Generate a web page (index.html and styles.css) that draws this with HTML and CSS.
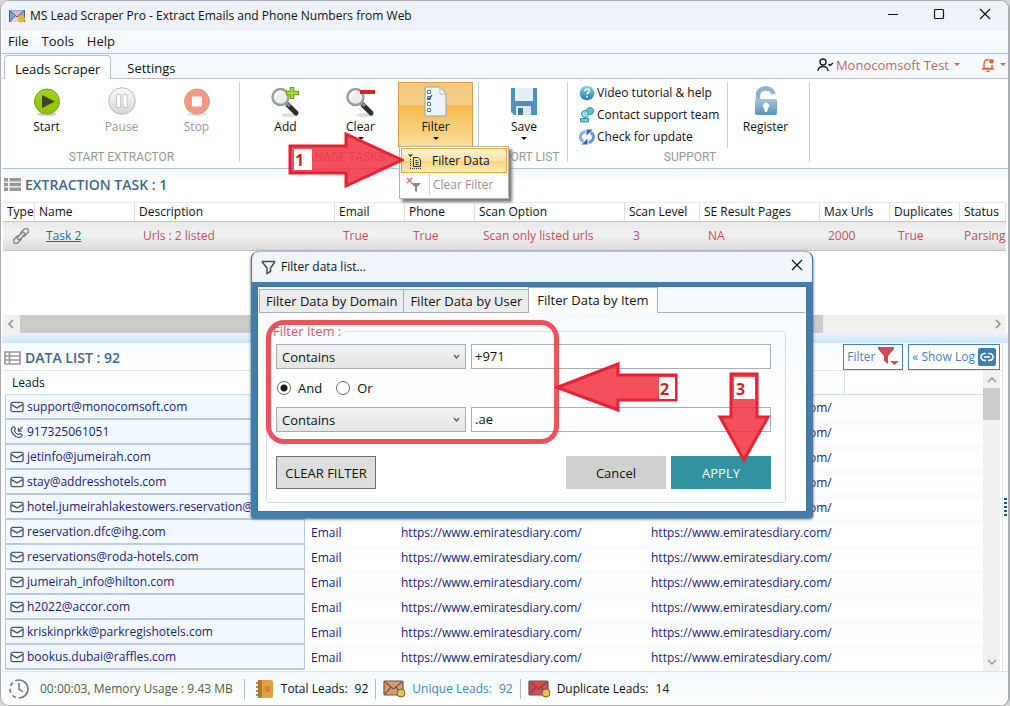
FILE: index.html
```html
<!DOCTYPE html>
<html lang="en">
<head>
<meta charset="utf-8">
<title>MS Lead Scraper Pro</title>
<link rel="stylesheet" href="styles.css">
</head>
<body>
<svg class="defs" width="0" height="0" aria-hidden="true">
  <defs>
    <symbol id="mail" viewBox="0 0 15 12"><rect x="1" y="1" width="13" height="10" rx="2" fill="none" stroke="#4c5866" stroke-width="1.4"/><path d="M1.5 3.5 7.5 7l6-3.5" fill="none" stroke="#4c5866" stroke-width="1.4"/></symbol>
    <symbol id="phone" viewBox="0 0 15 14"><path d="M3 1.500c1-.8 2 0 2.600 1.500.4 1-.9 1.600-.8 2.500.4 2 1.700 3.400 3.700 4 1 .2 1.500-1.200 2.500-.8 1.500.7 2.500 1.500 1.600 2.700C10 14 6.500 12.500 4 10 1.500 7.500.8 4 3 1.500z" fill="none" stroke="#4c5866" stroke-width="1.300"/><path d="M13.500 1.500 9 6M9 2.500V6h3.500" fill="none" stroke="#4c5866" stroke-width="1.300"/></symbol>
    <symbol id="letter" viewBox="0 0 23 18"><rect x="1" y="1" width="19" height="14" rx="1" fill="currentColor" stroke="#6b5550" stroke-width="1.200"/><path d="M1.500 1.500 10.500 9l9-7.500M1.500 14.500 8 7M19.500 14.500 13 7" fill="none" stroke="#6b5550" stroke-width="1.200"/><circle cx="18" cy="13" r="4" fill="#eac04f" stroke="#75603a"/></symbol>
    <linearGradient id="green" x2="0" y2="1"><stop offset="0" stop-color="#a6cf20"/><stop offset="1" stop-color="#8fc400"/></linearGradient>
    <linearGradient id="grey" x2="0" y2="1"><stop offset="0" stop-color="#fafafa"/><stop offset="1" stop-color="#d4d8da"/></linearGradient>
    <linearGradient id="lock" x2="0" y2="1"><stop offset="0" stop-color="#9cc5e3"/><stop offset="1" stop-color="#5f93b5"/></linearGradient>
    <linearGradient id="ball" x2="0" y2="1"><stop offset="0" stop-color="#8fd2e6"/><stop offset="1" stop-color="#1d7fb0"/></linearGradient>
    <symbol id="lens" viewBox="0 0 32 32"><ellipse cx="20" cy="29" rx="9" ry="2" fill="#ddd"/><path d="m18 19 8 8" stroke="#2e2e2e" stroke-width="5" stroke-linecap="round"/><path d="m16 17 4 3" stroke="#888" stroke-width="3"/><circle cx="10.500" cy="11" r="8" fill="#e9edf1" stroke="#999da0" stroke-width="2.500"/><path d="M5 12a6 6 0 0 1 7-6" stroke="#fff" stroke-width="2.500" fill="none"/></symbol>
  </defs>
</svg>
<main class="window">
  <header class="titlebar">
    <svg class="app-icon" width="16" height="13" viewBox="0 0 16 13"><rect width="16" height="12" rx="1" fill="#8baed2"/><path d="M0 12 6 5h4l6 7z" fill="#ecd5b0"/><path d="M0 1l8 6 8-6z" fill="#e5b6bd"/><path d="M0 1v11l6-6z" fill="#71a9d6"/><path d="M.5 12V.5L8 7l7.500-6.500V12M.5 12 6 6M15.500 12 10 6" fill="none" stroke="#4d587b"/><circle cx="12.500" cy="9" r="3.500" fill="#f2b13c"/></svg>
    <span class="title">MS Lead Scraper Pro - Extract Emails and Phone Numbers from Web</span>
    <div class="window-buttons">
      <button aria-label="Minimize"><svg width="12" height="12"><path d="M1 6.500h10" stroke="#111"/></svg></button>
      <button aria-label="Maximize"><svg width="12" height="12"><rect x="1.500" y="1.500" width="9" height="9" rx="1" fill="none" stroke="#111" stroke-width="1.200"/></svg></button>
      <button aria-label="Close"><svg width="12" height="12"><path d="m1 1 10 10M11 1 1 11" stroke="#111" stroke-width="1.200"/></svg></button>
    </div>
  </header>
  <nav class="menubar"><button>File</button><button>Tools</button><button>Help</button></nav>
  <div class="tabstrip">
    <button class="tab active">Leads Scraper</button><button class="tab">Settings</button>
    <div class="account">
      <button class="user"><svg width="17" height="14" viewBox="0 0 17 14"><circle cx="6" cy="4" r="3" fill="none" stroke="#1c1c24" stroke-width="1.400"/><path d="M1 13c0-6 10-6 10 0M11.500 6l1.500 1.500L16 5" fill="none" stroke="#1c1c24" stroke-width="1.400"/></svg>Monocomsoft Test<i class="caret"></i></button>
      <button class="bell" aria-label="Notifications"><svg width="14" height="14" viewBox="0 0 14 14"><path d="M8 2C4.500 1 3 3 3 6v4.500h8V7M1 11h12M5.500 13.300h3" fill="none" stroke="#f1592a" stroke-width="1.400"/><circle cx="10.500" cy="3.200" r="2.300" fill="#f1592a"/></svg><i class="caret"></i></button>
    </div>
  </div>
  <section class="ribbon">
    <div class="group g-start">
      <div class="tools">
        <button class="tool"><svg width="28" height="32" viewBox="0 0 28 32"><ellipse cx="14" cy="28" rx="10" ry="2" fill="#ccd"/><circle cx="14" cy="15.500" r="12.500" fill="url(#green)" stroke="#779b20"/><path d="m9 9 13 6.500L9 22z" fill="#40451f"/></svg>Start</button>
        <button class="tool off"><svg width="28" height="32" viewBox="0 0 28 32"><circle cx="14" cy="15" r="13.300" fill="url(#grey)" stroke="#bcbcbc"/><path d="M8.500 8.500h4v13h-4zM15 8.500h4v13h-4z" fill="#fff" stroke="#c5c9cc"/></svg>Pause</button>
        <button class="tool off"><svg width="28" height="32" viewBox="0 0 28 32"><ellipse cx="14" cy="28" rx="10" ry="2" fill="#eadbd6"/><circle cx="14" cy="15.500" r="12.500" fill="#f39a84" stroke="#cf9a8b"/><path d="M9 10.500h10v10H9z" fill="#fff"/></svg>Stop</button>
      </div>
      <h3>START EXTRACTOR</h3>
    </div>
    <div class="group g-manage">
      <div class="tools">
        <button class="tool"><svg width="32" height="32" viewBox="0 0 32 32"><use href="#lens"/><path d="M22 1v12M16 7h13" stroke="#64a318" stroke-width="4.600"/><path d="M22 2v10M17 7h11" stroke="#a6dc3c" stroke-width="2.400"/></svg>Add</button>
        <button class="tool"><svg width="32" height="32" viewBox="0 0 32 32"><use href="#lens"/><path d="M15 6h15" stroke="#cf2922" stroke-width="4"/></svg>Clear<i class="caret"></i></button>
        <button class="tool hot"><svg width="28" height="32" viewBox="0 0 28 32"><path d="M3 1h15l6 7v22H3z" fill="#eef3f8" stroke="#91a0b0"/><path d="M18 1v7h6z" fill="#fff" stroke="#aab4c0"/><path d="M5.500 4.500h3v3h-3zM5.500 10.500h3v3h-3zM5.500 16.500h3v3h-3zM5.500 22.500h3v3h-3z" fill="#fff" stroke="#657586"/><path d="m6 12 1 1 3-4" stroke="#223" fill="none"/></svg>Filter<i class="caret"></i></button>
      </div>
      <h3>MANAGE TASKS</h3>
    </div>
    <div class="group g-export">
      <div class="tools">
        <button class="tool"><svg width="28" height="32" viewBox="0 0 28 32"><path d="M1 2h26v27H4l-3-3z" fill="#5091bb"/><path d="M5 2h18v13H5z" fill="#e2f0f7"/><path d="M6 20h15v9H6z" fill="#dce9f0"/><path d="M8 22h5v7H8z" fill="#3976a0"/></svg>Save<i class="caret"></i></button>
      </div>
      <h3>EXPORT LIST</h3>
    </div>
    <div class="group g-support">
      <div class="tools">
        <div class="links">
          <button><svg width="16" height="16" viewBox="0 0 16 16"><circle cx="8" cy="8" r="7.300" fill="url(#ball)"/><path d="M5.700 6.200c.1-3 5-2.500 4.600 0C10 7.600 8 7.700 8 9.500M8 11v1.500" stroke="#fff" stroke-width="1.600" fill="none"/></svg>Video tutorial &amp; help</button>
          <button><svg width="16" height="16" viewBox="0 0 16 16"><circle cx="11" cy="4" r="3.500" fill="#5cc8d2" stroke="#3a8ea4"/><circle cx="6" cy="7" r="3.500" fill="#8ddde3" stroke="#3a8ea4"/><path d="M1.500 15v-3.500h8V15z" fill="#6bd0da" stroke="#3a8ea4"/></svg>Contact support team</button>
          <button><svg width="16" height="16" viewBox="0 0 16 16"><path d="M6.500 2.500C0 4 .5 11 4.500 12.500" fill="none" stroke="#7fb2e0" stroke-width="3"/><path d="M9.500 13.500C16 12 15.500 5 11.500 3.500" fill="none" stroke="#5d9dd5" stroke-width="3"/><path d="M2.500 15.500h6V9.500zM13.500.5h-6v6z" fill="#2f68ad"/></svg>Check for update</button>
        </div>
        <div class="register">
          <button class="tool"><svg width="28" height="32" viewBox="0 0 28 32"><path d="M6 14V9c0-8 14-9 15.500-1" fill="none" stroke="#8cb4d0" stroke-width="4.500"/><rect x="3" y="13" width="22" height="16" rx="2" fill="url(#lock)"/><path d="M12 22a3 3 0 1 1 4 0l-1 4h-2z" fill="#fff"/></svg>Register</button>
        </div>
      </div>
      <h3>SUPPORT</h3>
    </div>
  </section>

  <section class="tasks">
    <h2><svg width="17" height="13" viewBox="0 0 17 13"><path d="M0 0h4v3.500H0zM5.500 0H17v3.500H5.500zM0 4.800h4v3.500H0zM5.500 4.800H17v3.500H5.500zM0 9.500h4V13H0zM5.500 9.500H17V13H5.500z" fill="#989898"/></svg>EXTRACTION TASK : 1</h2>
    <table class="task-table">
      <colgroup><col class="w32"><col class="w100"><col class="w200"><col class="w70"><col class="w70"><col class="w150"><col class="w75"><col class="w120"><col class="w70"><col class="w70"><col></colgroup>
      <thead><tr><th>Type</th><th>Name</th><th>Description</th><th>Email</th><th>Phone</th><th>Scan Option</th><th>Scan Level</th><th>SE Result Pages</th><th>Max Urls</th><th>Duplicates</th><th>Status</th></tr></thead>
      <tbody><tr><td><svg class="clip" width="16" height="16" viewBox="0 0 16 16"><g transform="rotate(-45 8 8)" fill="none" stroke="#888" stroke-width="1.500"><rect x="-1.500" y="5.500" width="9" height="5" rx="2.500"/><rect x="8.500" y="5.500" width="9" height="5" rx="2.500"/><rect x="3.500" y="6.500" width="9" height="3" rx="1.500" fill="#eee"/></g></svg></td><td class="name"><a href="#task2">Task 2</a></td><td>Urls : 2 listed</td><td>True</td><td>True</td><td>Scan only listed urls</td><td>3</td><td>NA</td><td>2000</td><td>True</td><td>Parsing</td></tr></tbody>
    </table>
    <div class="hscroll"><svg width="17" height="17"><path d="m10 5-4 4 4 4" fill="none" stroke="#8d8d8d" stroke-width="1.500"/></svg><i></i><svg width="17" height="17"><path d="m7 5 4 4-4 4" fill="none" stroke="#8d8d8d" stroke-width="1.500"/></svg></div>
  </section>
  <div class="splitter"></div>

  <section class="data">
    <div class="data-main">
      <div class="data-head">
        <h2><svg width="17" height="14" viewBox="0 0 17 14"><path d="M1 1h15v12H1zM1 5h15M1 9h15M5.500 1v12" fill="none" stroke="#9a9a9a" stroke-width="1.700"/></svg>DATA LIST : 92</h2>
        <button class="box-button">Filter <svg width="21" height="19" viewBox="0 0 21 19"><path d="M0 0h16v2l-6 7v8l-4-3V9L0 2z" fill="#cc4b55"/><path d="M12 14h9l-4.500 4z" fill="#cc4b55"/></svg></button>
        <button class="box-button">« Show Log <svg width="18" height="18" viewBox="0 0 18 18"><rect width="18" height="18" rx="2" fill="#3f7db0"/><path d="M8 5.500H6.500a3.500 3.500 0 0 0 0 7H8M10 5.500h1.500a3.500 3.500 0 0 1 0 7H10M6 9h6" fill="none" stroke="#fff" stroke-width="1.700"/></svg></button>
      </div>
      <div class="data-scroll">
        <table class="lead-table">
          <colgroup><col class="w300"><col class="w90"><col class="w250"><col class="w200"><col></colgroup>
          <thead><tr><th>Leads</th><th></th><th></th><th></th><th></th></tr></thead>
          <tbody>
            <tr><td><svg class="ic"><use href="#mail"/></svg>support@monocomsoft.com</td><td>Email</td><td>https://www.emiratesdiary.com/</td><td>https://www.emiratesdiary.com/</td><td></td></tr>
            <tr><td><svg class="ic"><use href="#phone"/></svg>917325061051</td><td>Phone</td><td>https://www.emiratesdiary.com/</td><td>https://www.emiratesdiary.com/</td><td></td></tr>
            <tr><td><svg class="ic"><use href="#mail"/></svg>jetinfo@jumeirah.com</td><td>Email</td><td>https://www.emiratesdiary.com/</td><td>https://www.emiratesdiary.com/</td><td></td></tr>
            <tr><td><svg class="ic"><use href="#mail"/></svg>stay@addresshotels.com</td><td>Email</td><td>https://www.emiratesdiary.com/</td><td>https://www.emiratesdiary.com/</td><td></td></tr>
            <tr><td><svg class="ic"><use href="#mail"/></svg>hotel.jumeirahlakestowers.reservation@mo</td><td>Email</td><td>https://www.emiratesdiary.com/</td><td>https://www.emiratesdiary.com/</td><td></td></tr>
            <tr><td><svg class="ic"><use href="#mail"/></svg>reservation.dfc@ihg.com</td><td>Email</td><td>https://www.emiratesdiary.com/</td><td>https://www.emiratesdiary.com/</td><td></td></tr>
            <tr><td><svg class="ic"><use href="#mail"/></svg>reservations@roda-hotels.com</td><td>Email</td><td>https://www.emiratesdiary.com/</td><td>https://www.emiratesdiary.com/</td><td></td></tr>
            <tr><td><svg class="ic"><use href="#mail"/></svg>jumeirah_info@hilton.com</td><td>Email</td><td>https://www.emiratesdiary.com/</td><td>https://www.emiratesdiary.com/</td><td></td></tr>
            <tr><td><svg class="ic"><use href="#mail"/></svg>h2022@accor.com</td><td>Email</td><td>https://www.emiratesdiary.com/</td><td>https://www.emiratesdiary.com/</td><td></td></tr>
            <tr><td><svg class="ic"><use href="#mail"/></svg>kriskinprkk@parkregishotels.com</td><td>Email</td><td>https://www.emiratesdiary.com/</td><td>https://www.emiratesdiary.com/</td><td></td></tr>
            <tr><td><svg class="ic"><use href="#mail"/></svg>bookus.dubai@raffles.com</td><td>Email</td><td>https://www.emiratesdiary.com/</td><td>https://www.emiratesdiary.com/</td><td></td></tr>
          </tbody>
        </table>
        <div class="vscroll"><svg width="17" height="17"><path d="m5 11 4-4 4 4" fill="none" stroke="#999" stroke-width="1.500"/></svg><i></i><svg width="17" height="17"><path d="m5 6 4 4 4-4" fill="none" stroke="#999" stroke-width="1.500"/></svg></div>
      </div>
    </div>
    <aside class="grip"><i></i></aside>
  </section>

  <footer class="status">
    <div class="cell clock"><svg width="22" height="22" viewBox="0 0 22 22"><circle cx="11" cy="11" r="9" fill="none" stroke="#777" stroke-width="1.700" stroke-dasharray="28.300 3 4 3 4 3 4 3 4.200 0" transform="rotate(-90 11 11)"/><path d="M11 5v6l4 3" fill="none" stroke="#777" stroke-width="1.500"/></svg><span>00:00:03, Memory Usage : 9.43 MB</span></div>
    <div class="cell"><svg width="19" height="20" viewBox="0 0 19 20"><rect x="3" y="1" width="15" height="18" rx="2" fill="#dda043"/><path d="M3 1h4v18H3z" fill="#b97924"/><path d="M1 4h3M1 8h3M1 12h3M1 16h3" stroke="#8c6537" stroke-width="1.500"/><path d="M10 7h5v6h-5z" fill="#cd8730"/></svg><span>Total Leads:</span><span>92</span></div>
    <div class="cell unique"><svg class="letter tan" width="23" height="18"><use href="#letter"/></svg><span>Unique Leads:</span><span>92</span></div>
    <div class="cell"><svg class="letter red" width="23" height="18"><use href="#letter"/></svg><span>Duplicate Leads:</span><span>14</span></div>
  </footer>

  <div class="menu" role="menu">
    <button class="on" role="menuitem"><svg width="16" height="16" viewBox="0 0 16 16"><path d="M1 1.500h5L3.500 4z" fill="#333"/><path d="M6.500 4.500H11l2.500 2.500v6.500h-7zM8.500 7.500h2M8.500 9.500h3M8.500 11.500h3" fill="none" stroke="#333"/><path d="M3.500 6v8.500" fill="none" stroke="#333" stroke-dasharray="1 1"/><path d="M3 15.500h11" fill="none" stroke="#333" stroke-dasharray="1 1"/></svg><span>Filter Data</span></button>
    <button class="dim" role="menuitem" disabled><svg width="16" height="16" viewBox="0 0 16 16"><path d="m1 1 5 5M6 1 1 6" stroke="#d17f88" stroke-width="1.600"/><path d="M5 6h10l-4 4v5l-2-1v-4z" fill="#888"/></svg><span>Clear Filter</span></button>
  </div>

  <div class="dialog" role="dialog" aria-label="Filter data list">
    <header><svg width="15" height="15" viewBox="0 0 15 15"><path d="M1.500 1.500h12v1L9.500 8v3.500l-3.500 2V8L1.500 2.500z" fill="none" stroke="#454c55" stroke-width="1.500"/></svg><span>Filter data list...</span><button aria-label="Close"><svg width="12" height="12"><path d="m1 1 10 10M11 1 1 11" stroke="#111" stroke-width="1.200"/></svg></button></header>
    <div class="dialog-body">
      <div class="dialog-tabs"><button>Filter Data by Domain</button><button>Filter Data by User</button><button class="on">Filter Data by Item</button></div>
      <form>
        <fieldset>
          <legend>Filter Item :</legend>
          <div class="row"><select aria-label="First condition"><option>Contains</option></select><input type="text" aria-label="First value" value="+971"></div>
          <div class="row radios"><label><input type="radio" name="op" checked>And</label><label><input type="radio" name="op">Or</label></div>
          <div class="row"><select aria-label="Second condition"><option>Contains</option></select><input type="text" aria-label="Second value" value=".ae"></div>
          <div class="row actions"><button type="button" class="clear">CLEAR FILTER</button><button type="button" class="cancel">Cancel</button><button type="button" class="apply">APPLY</button></div>
        </fieldset>
      </form>
    </div>
  </div>

  <div class="mark ring"></div>
  <svg class="mark arrow1" width="116" height="58" viewBox="288 131 116 58"><path d="M290 146h56v-12l56 26-56 26v-13h-56z"/><rect x="294" y="149" width="18" height="21"/><text x="295" y="166">1</text></svg>
  <svg class="mark arrow2" width="124" height="52" viewBox="555 361 124 52"><path d="M557 387.500 618 364v11h58v25h-58v10z"/><rect x="659" y="377" width="16" height="22"/><text x="660" y="395">2</text></svg>
  <svg class="mark arrow3" width="54" height="90" viewBox="717 372 54 90"><path d="M731 374h26v43h11l-24 43-24-43h11z"/><rect x="734" y="377" width="21" height="22"/><text x="736" y="395">3</text></svg>
</main>
</body>
</html>
```
FILE: styles.css
```css
* { box-sizing: border-box; }
body { margin: 0; background: #d5d5d5; font: 12px/16px "Open Sans", "Noto Sans", sans-serif; color: #111; }
button { font: inherit; color: inherit; background: none; border: 0; padding: 0; margin: 0; }
h2, h3 { margin: 0; font-weight: 400; }
svg { flex: none; }
.defs { position: absolute; }
.window { position: relative; display: flex; flex-direction: column; min-height: 100vh; border: 1px solid #a9adb2; border-right-width: 2px; border-radius: 9px; background: #fff; overflow: hidden; padding-left: 1px; }

.titlebar { display: flex; align-items: center; height: 30px; background: #eff3f9; padding-left: 7px; gap: 5px; }
.title { flex: 1; white-space: nowrap; }
.window-buttons { display: flex; }
.window-buttons button { width: 46px; height: 28px; }
.menubar { display: flex; align-items: center; gap: 13px; height: 23px; padding: 0 0 2px 6px; font-size: 13px; background: linear-gradient(#f9fcff, #eff7fe); border-bottom: 1px solid #b7c2d1; }
.tabstrip { display: flex; align-items: flex-end; height: 25px; font-size: 13px; background: #f6faff; box-shadow: inset 0 -1px #b7c2d1; padding-left: 2px; }
.tab { height: 24px; padding: 2px 16px 0; }
.tab.active { padding: 2px 10px 0; background: #fff; border: 1px solid #b7c2d1; border-bottom: 0; border-radius: 4px 4px 0 0; }
.account { margin-left: auto; display: flex; gap: 21px; height: 25px; padding: 0 2px 4px 0; color: #c7616a; }
.account button { display: flex; align-items: center; gap: 2px; }
.caret { width: 0; height: 0; border: 3px solid transparent; border-top-color: currentColor; border-bottom: 0; }
.account .caret { margin-left: 3px; }

.ribbon { display: flex; height: 90px; padding: 3px 0 6px 2px; border-bottom: 1px solid #b7c2d1; }
.group { display: flex; flex-direction: column; border-right: 1px solid #c9ced4; }
.group h3 { margin-top: auto; text-align: center; color: #979797; font: 12px/10px Roboto, "Open Sans", sans-serif; }
.g-start { width: 236px; padding-left: 5px; }
.g-start h3 { padding-right: 5px; }
.g-manage { width: 239px; padding-left: 8px; }
.g-manage h3 { padding-right: 45px; }
.g-export { width: 89px; align-items: center; padding-left: 2px; }
.g-support { width: 242px; padding-left: 11px; }
.g-support h3 { padding-right: 8px; }
.tools { display: flex; height: 65px; }
.tool { display: flex; flex-direction: column; align-items: center; width: 75px; padding-top: 4px; }
.tool svg { margin-bottom: 1px; }
.tool .caret { margin-top: 2px; }
.off { color: #989898; }
.hot { border: 1px solid #d3a24f; background: linear-gradient(#f3c679, #f5cf8a 35%, #f5ba4f 36%, #fbdc9a); padding-top: 3px; }
.links { display: flex; flex-direction: column; width: 149px; height: 66px; border-right: 1px solid #c9ced4; }
.links button { display: flex; align-items: center; gap: 2px; height: 22px; white-space: nowrap; }

h2 { display: flex; align-items: center; gap: 4px; color: #45678a; font-size: 14px; font-weight: 600; }
.tasks { display: flex; flex-direction: column; height: 164px; padding: 0 2px 0 1px; background: linear-gradient(#f1f8ff, #fff 14px); }
.tasks h2 { height: 33px; padding: 0 0 2px 1px; }
table { border-spacing: 0; table-layout: fixed; width: 100%; white-space: nowrap; }
th, td { padding: 0; text-align: left; font-weight: 400; overflow: hidden; }
.w32 { width: 32px; } .w70 { width: 70px; } .w75 { width: 75px; } .w90 { width: 90px; } .w100 { width: 100px; } .w120 { width: 120px; } .w150 { width: 150px; } .w200 { width: 200px; } .w250 { width: 250px; } .w300 { width: 300px; }
.task-table th { height: 19px; padding-left: 4px; border-right: 1px solid #dfdfdf; border-top: 1px solid #e5eaee; }
.task-table th:first-child { padding-left: 4px; }
.task-table td { height: 30px; padding-left: 8px; color: #c44e5e; background: linear-gradient(#e9e9e9, #f1f1f1 45%, #dcdcdc); border: solid #c6c6c6; border-width: 1px 0; }
.task-table td:last-child { padding-left: 4px; }
.task-table .name { padding-left: 11px; }
.task-table a { color: #0f6cbd; }
.clip { display: block; margin-left: 2px; }
.hscroll { display: flex; margin-top: auto; height: 18px; background: #f0f0f0; }
.hscroll i { width: 803px; background: #cbcbcb; }
.hscroll svg:last-child { margin-left: auto; }
.splitter { height: 10px; background: linear-gradient(#e9f4ff, #cde5fd); }

.data { display: flex; flex: 1; }
.data-main { flex: 1; min-width: 0; display: flex; flex-direction: column; border-right: 1px solid #d6e4ef; }
.data-head { display: flex; align-items: center; gap: 5px; height: 28px; padding: 0 2px; background: linear-gradient(#f7fbff, #fff); border-bottom: 1px solid #e0e8ee; }
.data-head h2 { flex: 1; padding-top: 2px; }
.box-button { display: flex; align-items: center; gap: 3px; height: 26px; padding: 0 3px; border: 1px solid #4681ae; color: #4d7fb1; background: #fff; }
.data-scroll { flex: 1; display: flex; align-items: flex-start; padding: 0 2px 0 3px; }
.lead-table { flex: 1; width: 0; }
.lead-table th { height: 24px; padding-left: 7px; border-bottom: 1px solid #d2dce4; }
.lead-table th:nth-child(4) { border-right: 1px solid #dde3e8; }
.lead-table td { height: 25px; padding-left: 6px; color: #1c1c72; background: linear-gradient(#f7fbff, #fff 40%); }
.lead-table td:first-child { padding-left: 4px; background: #f2f8ff; border: 1px solid #b9cbdb; border-width: 0 1px 2px; }
.ic { width: 14px; height: 14px; vertical-align: -3px; margin-right: 3px; }
.vscroll { align-self: stretch; width: 17px; display: flex; flex-direction: column; background: #f0f0f0; }
.vscroll i { height: 32px; background: #cbcbcb; }
.vscroll svg:last-child { margin-top: auto; }
.grip { display: flex; align-items: center; width: 5px; padding-left: 1px; }
.grip i { width: 3px; height: 18px; background: repeating-linear-gradient(#2d527e 0 2px, transparent 2px 4px); }

.status { display: flex; align-items: center; height: 34px; padding-left: 6px; border-top: 1px solid #d8e5ed; background: linear-gradient(#f3f9ff, #fff); }
.cell { display: flex; align-items: center; gap: 7px; height: 20px; padding: 0 7px; border-right: 1px solid #b4bbc2; white-space: nowrap; }
.cell:last-child { border: 0; }
.clock { gap: 10px; padding: 0 11px 0 0; color: #525c49; }
.clock + .cell { padding-left: 10px; }
.unique { color: #4584b6; font-weight: 500; }
.letter { margin-right: -1px; }
.tan { color: #d99c68; }
.red { color: #df4650; }

.menu { position: absolute; left: 398px; top: 145px; width: 110px; padding: 1px; background: #fff; border: 1px solid #b5b5b5; box-shadow: 3px 3px 3px #777; }
.menu button { display: flex; align-items: center; width: 100%; height: 24px; padding-left: 5px; gap: 7px; }
.menu .on { height: 25px; border: 1px solid #e2af2d; background: linear-gradient(#fff5d5, #fce1a1 50%, #fbd17a 51%, #fdebb9); }
.menu .dim { color: #929292; padding-left: 5px; }
.menu span { border-left: 1px solid transparent; padding-left: 1px; }
.menu .dim span { border-color: #d6d6d6; padding-left: 3px; line-height: 22px; }

.dialog { position: absolute; left: 250px; top: 250px; width: 562px; border: 1px solid #4779a4; border-top-color: #bac0c6; border-radius: 8px 8px 3px 3px; background: #417eae; box-shadow: 0 1px 3px #456; }
.dialog header { display: flex; align-items: center; gap: 5px; height: 30px; padding: 0 9px; background: #f0f5fa; border-radius: 7px 7px 0 0; }
.dialog header button { margin-left: auto; height: 16px; }
.dialog-body { margin: 4px 5px 5px; padding: 0 1px 1px; background: linear-gradient(#f3faff, #fff 130px); border: 1px solid #4b6e8b; }
.dialog-tabs { display: flex; align-items: flex-end; height: 26px; font-size: 13px; box-shadow: inset 0 -1px #a9b0b7; }
.dialog-tabs button { height: 24px; padding: 0 6px; border: 1px solid #a9b0b7; background: #ececec; margin-right: -1px; }
.dialog-tabs .on { height: 26px; padding: 0 8px 2px; background: #fff; border-bottom: 0; }
form { padding: 10px 19px 7px 7px; font-size: 13px; }
fieldset { margin: 0; padding: 5px 14px 13px 9px; border: 1px solid #d8dde0; border-radius: 3px; }
legend { padding: 0 4px 0 0; margin-left: -3px; color: #c7616a; line-height: 16px; }
.row { display: flex; align-items: center; gap: 5px; }
.row select, .row input[type=text] { height: 25px; font: inherit; color: #111; border: 1px solid #a9adb0; border-radius: 0; margin: 0; }
.row select { width: 190px; padding: 0 5px; appearance: none; background: url("data:image/svg+xml,%3Csvg xmlns='http://www.w3.org/2000/svg' width='7' height='6'%3E%3Cpath d='m1 1 2.500 3L6 1' fill='none' stroke='%23555' stroke-width='1.200'/%3E%3C/svg%3E") no-repeat right 5px center, linear-gradient(#f1f1f1, #e5e5e5); }
.row input[type=text] { flex: 1; min-width: 0; padding: 0 3px 2px; background: #fff; }
.radios { height: 38px; gap: 14px; padding-left: 1px; }
.radios label { display: flex; align-items: center; gap: 7px; }
.radios input { appearance: none; width: 14px; height: 14px; margin: 0; border: 1px solid #666; border-radius: 50%; background: #fff; }
.radios input:checked { background: radial-gradient(#1b1b22 3px, #fff 4px); }
.actions { margin-top: 24px; }
.actions button { width: 100px; height: 33px; background: #d0d0d0; }
.actions .clear { margin-right: auto; border: 1px solid #707070; background: #ddd; }
.actions .apply { background: #32929f; color: #fff; }

.mark { position: absolute; pointer-events: none; }
.mark path { fill: #f1303f; fill-opacity: .85; stroke: #ea2034; stroke-width: 3; }
.mark rect { fill: #fff; }
.mark text { fill: #cf1f2c; font: bold 16px "Open Sans", sans-serif; }
.ring { left: 265px; top: 319px; width: 293px; height: 124px; border: 5px solid rgba(236, 52, 70, .86); border-radius: 18px; }
.arrow1 { left: 287px; top: 130px; }
.arrow2 { left: 554px; top: 360px; }
.arrow3 { left: 716px; top: 371px; }
```
